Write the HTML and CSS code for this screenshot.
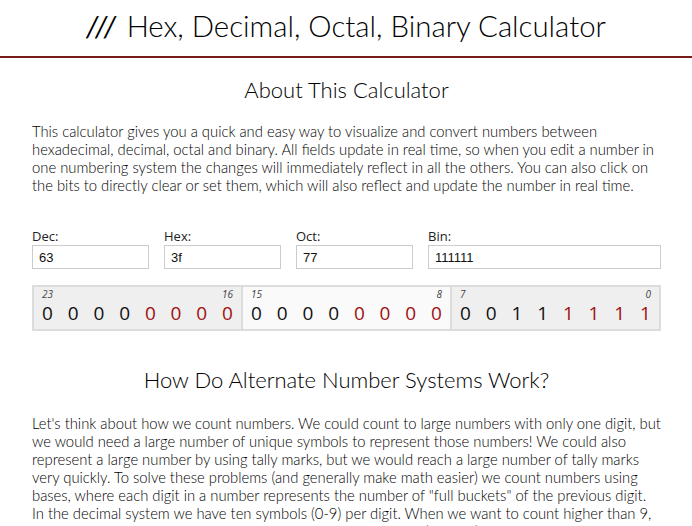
FILE: index.html
```html
<!DOCTYPE html>
<html>
<head>
<meta charset="utf-8">
<link rel="stylesheet" href="styles.css">
</head>
<body>
<header class="site-header">
  <h1 class="site-title"><span class="slashes">///</span> Hex, Decimal, Octal, Binary Calculator</h1>
</header>
<main class="content">
  <h2 class="section-title">About This Calculator</h2>
  <p class="text">This calculator gives you a quick and easy way to visualize and convert numbers between<br>hexadecimal, decimal, octal and binary. All fields update in real time, so when you edit a number in<br>one numbering system the changes will immediately reflect in all the others. You can also click on<br>the bits to directly clear or set them, which will also reflect and update the number in real time.</p>

  <div class="fields">
    <label class="field"><span class="field-label">Dec:</span><input class="field-input" value="63"></label>
    <label class="field"><span class="field-label">Hex:</span><input class="field-input" value="3f"></label>
    <label class="field"><span class="field-label">Oct:</span><input class="field-input" value="77"></label>
    <label class="field field-wide"><span class="field-label">Bin:</span><input class="field-input" value="111111"></label>
  </div>

  <div class="bits">
    <div class="byte">
      <div class="byte-idx"><span>23</span><span>16</span></div>
      <div class="byte-digits"><span>0</span><span>0</span><span>0</span><span>0</span><span class="r">0</span><span class="r">0</span><span class="r">0</span><span class="r">0</span></div>
    </div>
    <div class="byte byte-light">
      <div class="byte-idx"><span>15</span><span>8</span></div>
      <div class="byte-digits"><span>0</span><span>0</span><span>0</span><span>0</span><span class="r">0</span><span class="r">0</span><span class="r">0</span><span class="r">0</span></div>
    </div>
    <div class="byte">
      <div class="byte-idx"><span>7</span><span>0</span></div>
      <div class="byte-digits"><span>0</span><span>0</span><span>1</span><span>1</span><span class="r">1</span><span class="r">1</span><span class="r">1</span><span class="r">1</span></div>
    </div>
  </div>

  <h2 class="section-title section-title-2">How Do Alternate Number Systems Work?</h2>
  <p class="text">Let's think about how we count numbers. We could count to large numbers with only one digit, but<br>we would need a large number of unique symbols to represent those numbers! We could also<br>represent a large number by using tally marks, but we would reach a large number of tally marks<br>very quickly. To solve these problems (and generally make math easier) we count numbers using<br>bases, where each digit in a number represents the number of "full buckets" of the previous digit.<br>In the decimal system we have ten symbols (0-9) per digit. When we want to count higher than 9,<br>we add a 1 to the tens digit, then set the ones digit back to 0 (09 &gt;10). The 1 in the tens digit<br>represents one full bucket of ones.</p>
</main>
</body>
</html>
```
FILE: styles.css
```css
html, body { margin: 0; padding: 0; background: #fff; }
body { font-family: Lato, "Open Sans", sans-serif; color: #000; }

.site-header {
  border-bottom: 2px solid #7a1b1b;
  height: 56px;
  display: flex;
  align-items: center;
  justify-content: center;
}
.site-title {
  margin: 0 0 6px;
  font-weight: 300;
  font-size: 29.4px;
  color: #000;
}
.slashes { font-weight: 400; font-style: italic; letter-spacing: 2.5px; }

.content { padding: 0 31px 0 32px; }

.section-title {
  margin: 17px 0 0;
  text-align: center;
  font-weight: 300;
  font-size: 22px;
  line-height: 30px;
}
.section-title-2 { margin-top: 34px; }

.text {
  margin: 17px 0 0;
  font-size: 14.8px;
  line-height: 18px;
  font-weight: 300;
  white-space: nowrap;
}
.section-title-2 + .text { margin-top: 19px; }

.fields {
  display: flex;
  gap: 15px;
  margin-top: 33px;
}
.field { display: flex; flex-direction: column; width: 117px; }
.field-wide { flex: 1; }
.field-label { font-family: "Open Sans", sans-serif; font-size: 13px; line-height: 18px; color: #222; }
.field-input {
  box-sizing: border-box;
  height: 24px;
  margin: 0;
  border: 1px solid #ccc;
  padding: 2px 6px;
  font-family: "Liberation Sans", Arial, sans-serif;
  font-size: 13px;
  color: #111;
  outline: none;
}

.bits {
  display: flex;
  margin-top: 16px;
  border: 2px solid #dcdcdc;
  background: #efefef;
  font-family: "Open Sans", sans-serif;
}
.byte { flex: 1; padding: 1px 8px 3px 8px; }
.byte + .byte { border-left: 2px solid #dcdcdc; }
.byte-light { background: #fafafa; }
.byte-idx {
  display: flex;
  justify-content: space-between;
  font-size: 10px;
  font-style: italic;
  color: #444;
  line-height: 13px;
}
.byte-digits {
  display: flex;
  justify-content: space-between;
  font-size: 19px;
  line-height: 25px;
  color: #111;
}
.byte-digits .r { color: #a01010; }
```
